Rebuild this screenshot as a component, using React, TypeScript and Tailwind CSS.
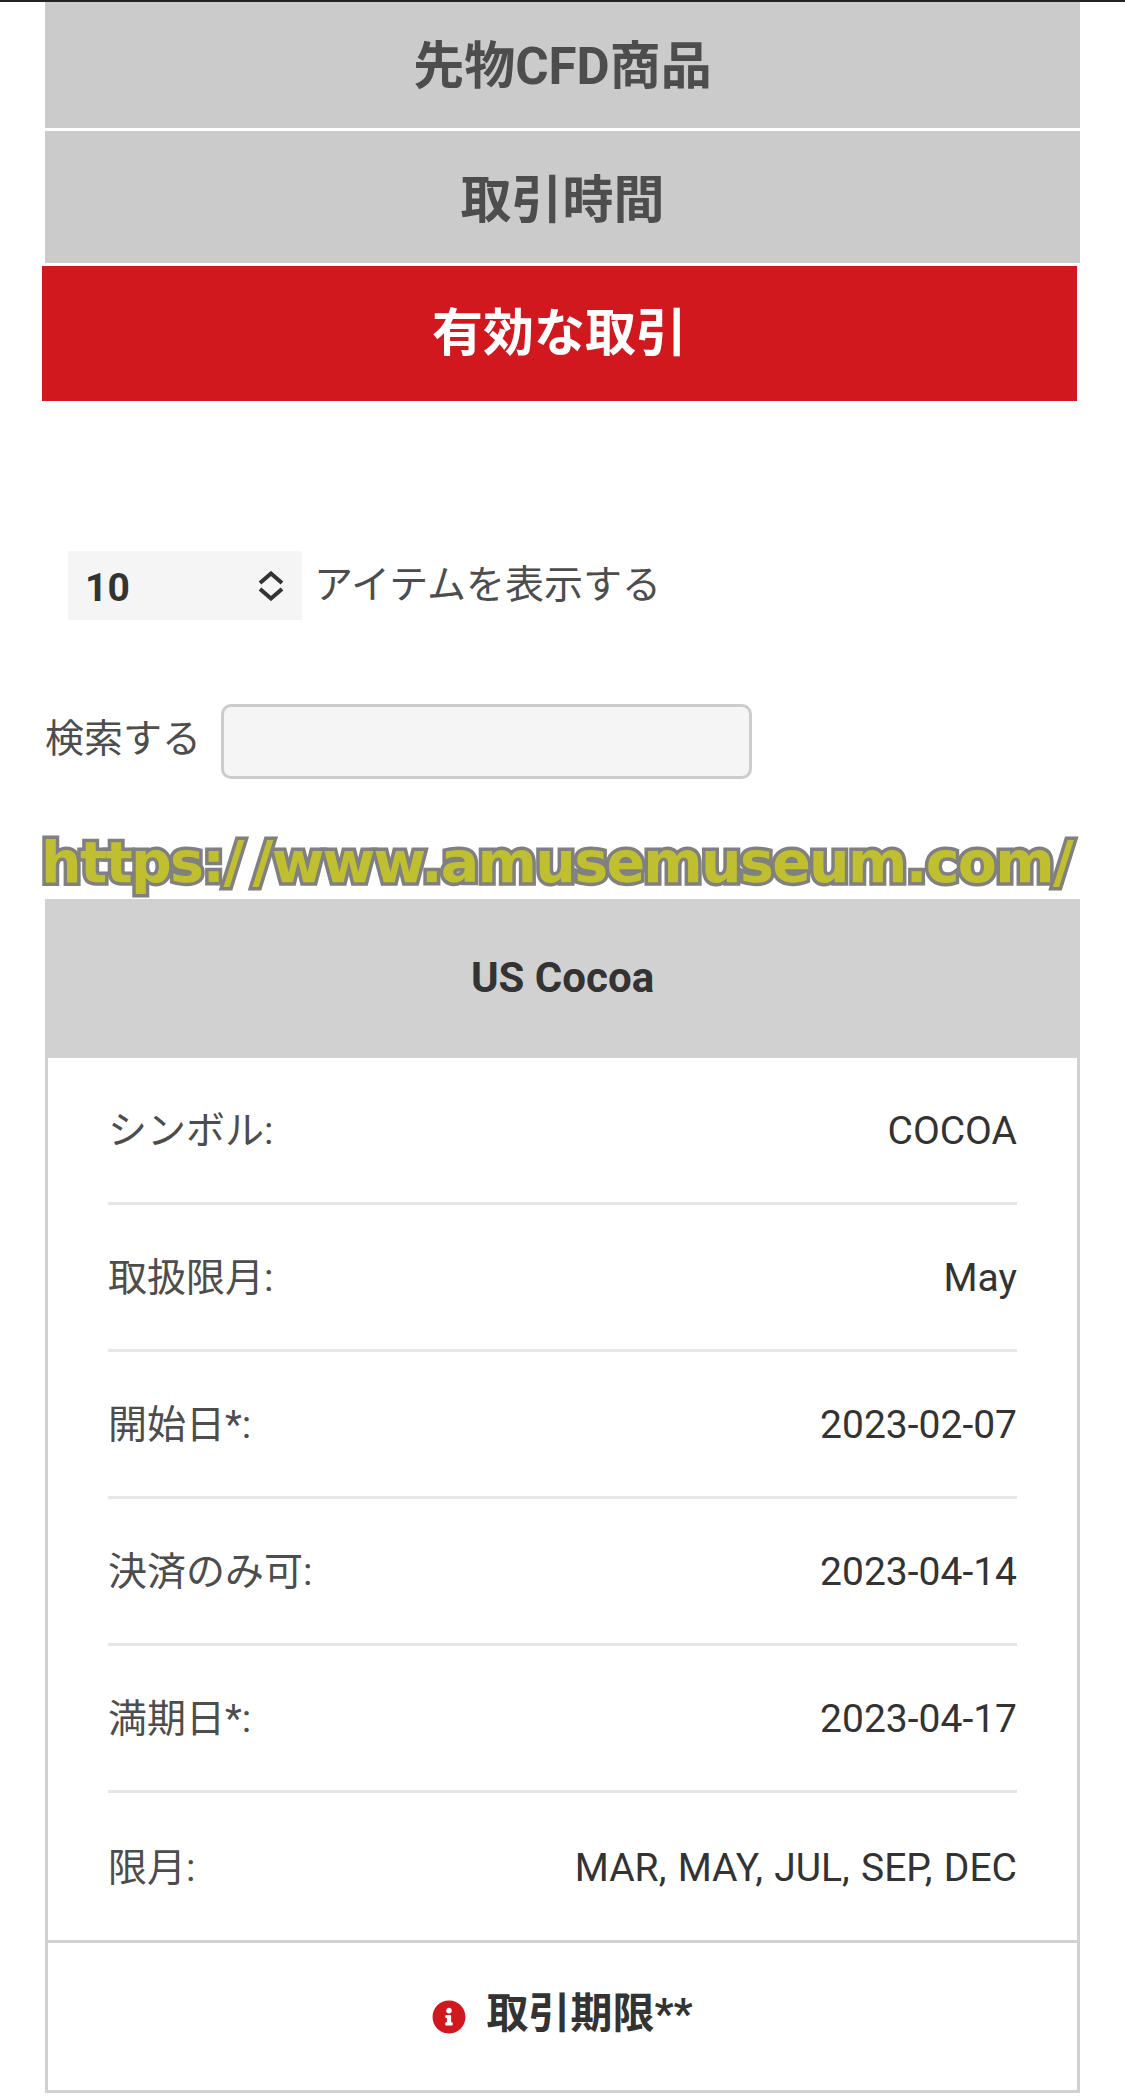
import React from "react";
import { FaInfoCircle } from "react-icons/fa";

const rows: [string, string][] = [
  ["シンボル:", "COCOA"],
  ["取扱限月:", "May"],
  ["開始日*:", "2023-02-07"],
  ["決済のみ可:", "2023-04-14"],
  ["満期日*:", "2023-04-17"],
  ["限月:", "MAR, MAY, JUL, SEP, DEC"],
];

export default function App() {
  return (
    <div className="w-[1125px] h-[2098px] overflow-hidden bg-white text-[39px] leading-[58px] text-[#333] font-['Roboto','Noto_Sans_CJK_JP',sans-serif]">
      <div className="h-[2px] bg-[#222]" />
      <div className="flex h-[126px] w-[1035px] ml-[45px] items-center justify-center bg-[#cbcbcb] pt-[3px] text-[51px] font-bold text-[#4d4d4d]">先物CFD商品</div>
      <div className="mt-[3px] flex h-[132px] w-[1035px] ml-[45px] items-center justify-center bg-[#cbcbcb] pt-[7px] text-[51px] font-bold text-[#4d4d4d]">取引時間</div>
      <div className="mt-[3px] flex h-[135px] w-[1035px] ml-[42px] items-center justify-center bg-[#d2181f] text-[51px] font-bold text-white">有効な取引</div>

      <div className="mt-[150px] ml-[68px] flex items-center">
        <div className="flex h-[69px] w-[234px] items-center justify-between bg-[#f5f5f5] pl-[17px] pr-[17px] font-bold">
          <span className="pt-[5px]">10</span>
          <svg width="28" height="30" viewBox="0 0 28 30" fill="none" stroke="#333" strokeWidth="4">
            <path d="M3 12 L14 2.5 L25 12" />
            <path d="M3 18 L14 27.5 L25 18" />
          </svg>
        </div>
        <span className="ml-[12px] -mt-[2px] text-[#4d4d4d]">アイテムを表示する</span>
      </div>

      <div className="mt-[84px] ml-[45px] flex items-center">
        <span className="-mt-[5px] text-[#4d4d4d]">検索する</span>
        <div className="ml-[20px] h-[75px] w-[531px] rounded-[10px] border-[3px] border-[#cccccc] bg-[#f5f5f5]" />
      </div>

      <div className="mt-[54px] ml-[41px] h-[66px] whitespace-nowrap text-[57px] leading-[58px] font-bold tracking-[-1.7px] text-[#bfbf30] font-['DejaVu_Sans',sans-serif] [-webkit-text-stroke:7px_#808080] [paint-order:stroke_fill]">
        https:/<span className="ml-[10px]">/www.amusemuseum.com/</span>
      </div>

      <div className="ml-[45px] w-[1035px] border-x-[3px] border-b-[3px] border-[#d1d1d1]">
        <div className="-mx-[3px] flex h-[159px] items-center justify-center bg-[#d1d1d1] pb-[2px] text-[42px] font-bold">US Cocoa</div>
        <div className="px-[60px]">
          {rows.map(([k, v], i) => (
            <div key={k} className={"flex h-[147px] items-center justify-between pt-[2px] [word-spacing:1.7px] " + (i < 5 ? "border-b-[3px] border-[#e6e6e6]" : "")}>
              <span className="text-[#4d4d4d]">{k}</span>
              <span>{v}</span>
            </div>
          ))}
        </div>
        <div className="flex h-[150px] items-center justify-center border-t-[3px] border-[#d1d1d1] text-[42px] font-bold">
          <FaInfoCircle className="mr-[20px] text-[#d2181f]" size={34} />
          <span className="pb-[5px]">取引期限**</span>
        </div>
      </div>
    </div>
  );
}
